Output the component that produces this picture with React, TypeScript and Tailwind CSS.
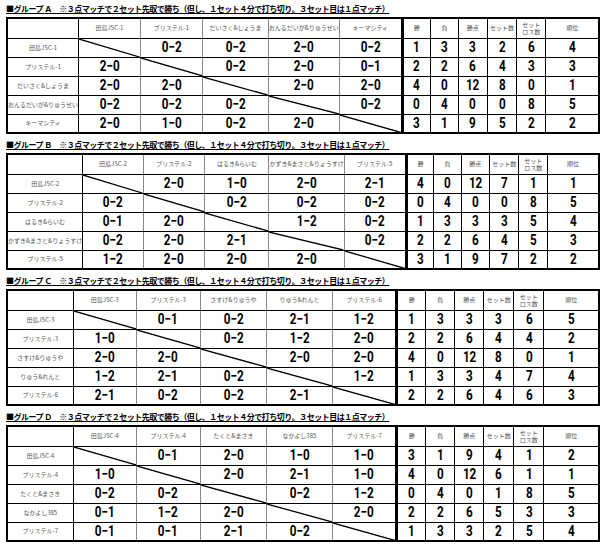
import React from "react";

type Group = {
  label: string;
  teams: string[];
  scores: (string | null)[][];
  stats: number[][];
};

const groups: Group[] = [
  {
    label: "Ａ",
    teams: ["田島JSC-1", "ブリステル-1", "だいさく&しょうま", "おんるだいが&りゅうせい", "キーマシティ"],
    scores: [
      [null, "0−2", "0−2", "2−0", "0−2"],
      ["2−0", null, "0−2", "2−0", "0−1"],
      ["2−0", "2−0", null, "2−0", "2−0"],
      ["0−2", "0−2", "0−2", null, "0−2"],
      ["2−0", "1−0", "0−2", "2−0", null],
    ],
    stats: [
      [1, 3, 3, 2, 6, 4],
      [2, 2, 6, 4, 3, 3],
      [4, 0, 12, 8, 0, 1],
      [0, 4, 0, 0, 8, 5],
      [3, 1, 9, 5, 2, 2],
    ],
  },
  {
    label: "Ｂ",
    teams: ["田島JSC-2", "ブリステル-2", "はるき&らいむ", "かずき&まさと&りょうすけ", "ブリステル-5"],
    scores: [
      [null, "2−0", "1−0", "2−0", "2−1"],
      ["0−2", null, "0−2", "0−2", "0−2"],
      ["0−1", "2−0", null, "1−2", "0−2"],
      ["0−2", "2−0", "2−1", null, "0−2"],
      ["1−2", "2−0", "2−0", "2−0", null],
    ],
    stats: [
      [4, 0, 12, 7, 1, 1],
      [0, 4, 0, 0, 8, 5],
      [1, 3, 3, 3, 5, 4],
      [2, 2, 6, 4, 5, 3],
      [3, 1, 9, 7, 2, 2],
    ],
  },
  {
    label: "Ｃ",
    teams: ["田島JSC-3", "ブリステル-3", "さすけ&りゅうや", "りゅう&れんと", "ブリステル-6"],
    scores: [
      [null, "0−1", "0−2", "2−1", "1−2"],
      ["1−0", null, "0−2", "1−2", "2−0"],
      ["2−0", "2−0", null, "2−0", "2−0"],
      ["1−2", "2−1", "0−2", null, "1−2"],
      ["2−1", "0−2", "0−2", "2−1", null],
    ],
    stats: [
      [1, 3, 3, 3, 6, 5],
      [2, 2, 6, 4, 4, 2],
      [4, 0, 12, 8, 0, 1],
      [1, 3, 3, 4, 7, 4],
      [2, 2, 6, 4, 6, 3],
    ],
  },
  {
    label: "Ｄ",
    teams: ["田島JSC-4", "ブリステル-4", "たくと&まさき", "なかよし385", "ブリステル-7"],
    scores: [
      [null, "0−1", "2−0", "1−0", "1−0"],
      ["1−0", null, "2−0", "2−1", "1−0"],
      ["0−2", "0−2", null, "0−2", "1−2"],
      ["0−1", "1−2", "2−0", null, "2−0"],
      ["0−1", "0−1", "2−1", "0−2", null],
    ],
    stats: [
      [3, 1, 9, 4, 1, 2],
      [4, 0, 12, 6, 1, 1],
      [0, 4, 0, 1, 8, 5],
      [2, 2, 6, 5, 3, 3],
      [1, 3, 3, 2, 5, 4],
    ],
  },
];

const colWidths = [66, 63, 64, 66, 66, 64, 29, 29, 29, 30, 30, 55];

const jp = "font-['Noto_Sans_CJK_JP',sans-serif]";

function Num({ children }: { children: React.ReactNode }) {
  return (
    <span className="inline-block scale-x-[0.78] font-['Roboto',sans-serif] text-[15px] font-bold leading-none text-black">
      {children}
    </span>
  );
}

function GroupTable({ group }: { group: Group }) {
  return (
    <div className="flex flex-col">
      <div className={`${jp} h-[15px] text-[8px] font-bold leading-[13px] tracking-[-0.5px] whitespace-nowrap text-black underline underline-offset-1`}>
        ■グループ {group.label}　※３点マッチで２セット先取で勝ち（但し、１セット４分で打ち切り。３セット目は１点マッチ）
      </div>

      <table className="table-fixed border-collapse border-2 border-black text-[6px] leading-none">
        <colgroup>
          {colWidths.map((w, i) => (
            <col key={i} style={{ width: w }} />
          ))}
        </colgroup>

        <thead>
          <tr className="h-[20px]">
            <th className="border border-black" />
            {group.teams.map((t) => (
              <th
                key={t}
                className={`${jp} overflow-hidden border-x border-x-[#888] border-b border-b-black p-0 text-[6px] font-normal whitespace-nowrap text-[#555]`}
              >
                {t}
              </th>
            ))}
            {["勝", "負", "勝点", "セット数"].map((h, i) => (
              <th
                key={h}
                className={`${jp} border border-black p-0 text-[6px] font-normal whitespace-nowrap text-[#555] ${i === 0 ? "border-l-[3px] border-l-double" : ""}`}
              >
                {h}
              </th>
            ))}
            <th className={`${jp} border border-black p-0 text-[6px] font-normal leading-[7px] text-[#555]`}>
              セット
              <br />
              ロス数
            </th>
            <th className={`${jp} border border-black p-0 text-[6px] font-normal text-[#555]`}>順位</th>
          </tr>
        </thead>

        <tbody>
          {group.teams.map((team, r) => (
            <tr key={team} className="h-[19px]">
              <td className={`${jp} overflow-hidden border border-black p-0 text-center text-[6px] whitespace-nowrap text-[#555]`}>
                {team}
              </td>

              {group.scores[r].map((s, c) =>
                s === null ? (
                  <td key={c} className="relative border-y border-y-black border-x border-x-[#888] p-0">
                    <svg className="absolute inset-0 h-full w-full" preserveAspectRatio="none" viewBox="0 0 100 100">
                      <line x1="0" y1="0" x2="100" y2="100" stroke="black" strokeWidth="1.3" vectorEffect="non-scaling-stroke" />
                    </svg>
                  </td>
                ) : (
                  <td key={c} className="border-y border-y-black border-x border-x-[#888] p-0 text-center">
                    <Num>{s}</Num>
                  </td>
                )
              )}

              {group.stats[r].map((v, i) => (
                <td
                  key={i}
                  className={`border border-black p-0 text-center ${i === 0 ? "border-l-[3px] border-l-double" : ""}`}
                >
                  <Num>{v}</Num>
                </td>
              ))}
            </tr>
          ))}
        </tbody>
      </table>
    </div>
  );
}

export default function App() {
  return (
    <div className="flex h-[546px] w-[600px] flex-col gap-[4px] bg-white pl-[6px] pt-[2px]">
      {groups.map((g) => (
        <GroupTable key={g.label} group={g} />
      ))}
    </div>
  );
}
